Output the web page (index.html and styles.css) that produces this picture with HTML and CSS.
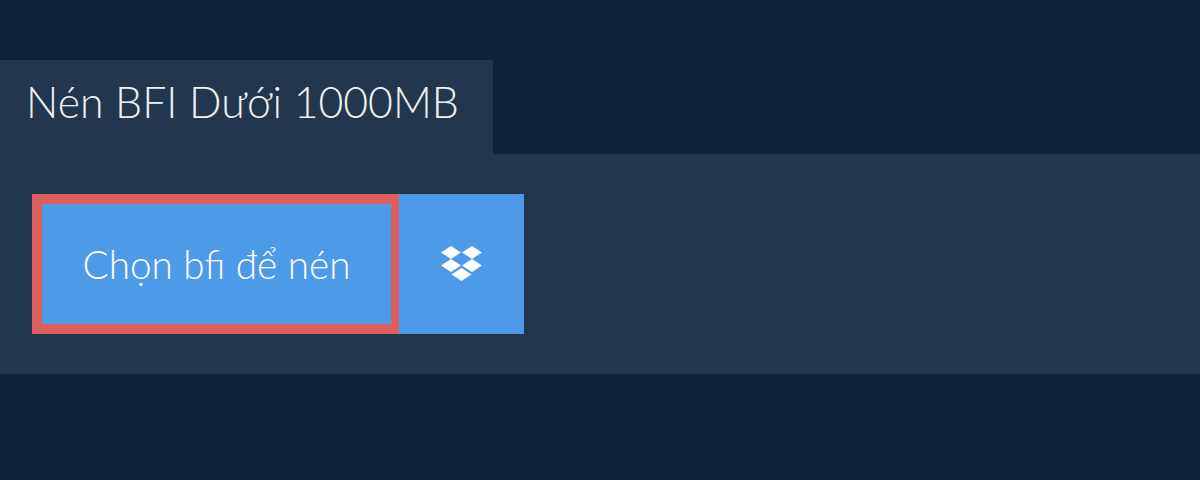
FILE: index.html
```html
<!DOCTYPE html>
<html>
<head>
  <meta charset="UTF-8">
  <title>Nén BFI Dưới 1000MB</title>
  <link rel="stylesheet" href="styles.css">
</head>
<body>
  <div class="tab-title">Nén BFI Dưới 1000MB</div>
  <div class="panel">
    <button class="pick-btn">Chọn bfi để nén</button>
    <button class="dropbox-btn">
      <svg class="dropbox-icon" viewBox="0 0 41 35" width="41" height="35">
        <g fill="#fff">
          <polygon points="0,6.5 10,0 20,6.5 10,13"/>
          <polygon points="21,6.5 31,0 41,6.5 31,13"/>
          <polygon points="0,19.5 10,13 20,19.5 10,26"/>
          <polygon points="21,19.5 31,13 41,19.5 31,26"/>
          <polygon points="10.500,28.500 20.500,22 30.500,28.500 20.500,35"/>
        </g>
      </svg>
    </button>
  </div>
</body>
</html>
```

FILE: styles.css
```css
body {
  margin: 0;
  padding-top: 60px;
  height: 420px;
  overflow: hidden;
  background-color: #0e2539;
  font-family: Lato, "Noto Sans", sans-serif;
  font-weight: 300;
  color: #fff;
}
.tab-title {
  width: 493px;
  height: 94px;
  box-sizing: border-box;
  padding-left: 26px;
  background-color: #20374f;
  color: #f0f0f0;
  font-size: 42.8px;
  line-height: 83px;
}
.panel {
  display: flex;
  padding: 40px 32px;
  background-color: #20374f;
}
button {
  border: none;
  padding: 0;
  height: 140px;
  font-family: inherit;
  font-weight: 300;
  color: #fff;
  background-color: #4c9ae8;
}
.pick-btn {
  width: 367px;
  border: 10px solid #dd5f5c;
  border-right-width: 8px;
  font-size: 38.7px;
}
.dropbox-btn {
  width: 125px;
  display: flex;
  align-items: center;
  justify-content: center;
}
.dropbox-icon {
  margin-bottom: 1px;
}
```
